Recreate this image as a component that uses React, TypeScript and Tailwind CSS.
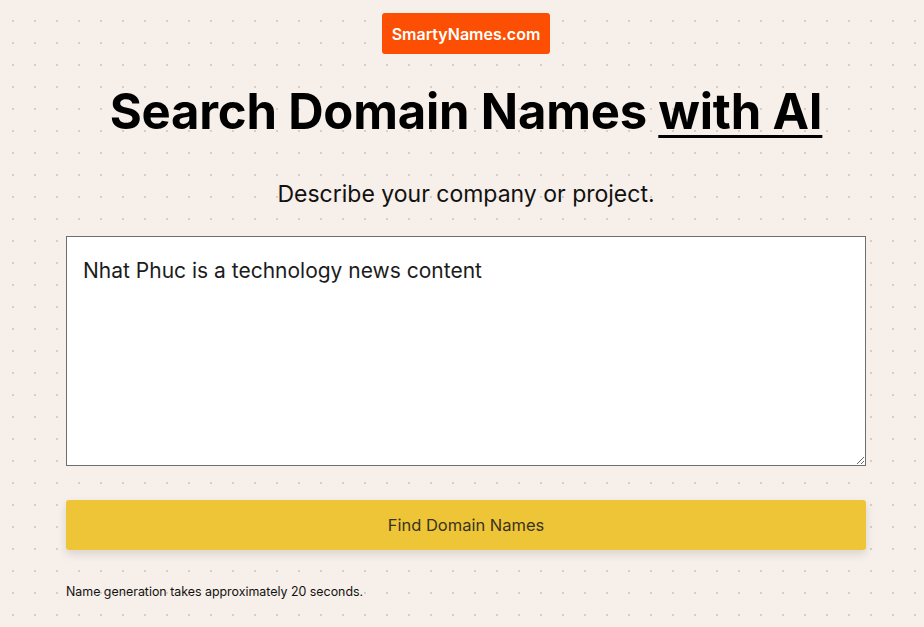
import React, { useState } from 'react';

const App: React.FC = () => {
  const [text, setText] = useState('Nhat Phuc is a technology news content');

  return (
    <div
      className="min-h-[627px] w-full bg-[#f7efe9] bg-[radial-gradient(#d9cec4_0.8px,transparent_1px)] bg-[size:22px_22px] bg-[position:2px_10px] pl-[8px] text-black"
      style={{ fontFamily: 'Inter, "Noto Sans", sans-serif' }}
    >
      <div className="mx-auto flex w-[800px] flex-col items-center pt-[13px]">
        {/* Brand badge */}
        <a
          href="#"
          className="flex h-[41px] w-[168px] items-center justify-center rounded-[3px] bg-[#fd4f03] text-[16px] font-semibold text-white"
        >
          SmartyNames.com
        </a>

        <h1 className="mt-[30px] text-[49px] font-bold leading-[56px] tracking-[-0.2px]">
          Search Domain Names <span className="underline decoration-[3px] underline-offset-[6px]">with AI</span>
        </h1>

        <p className="mt-[40px] text-[23px] leading-[28px] text-[#111]">Describe your company or project.</p>

        {/* Description input */}
        <textarea
          value={text}
          onChange={(e) => setText(e.target.value)}
          className="mt-[28px] h-[230px] w-full resize-y border border-[#6e6e6e] bg-white px-4 py-[20px] text-[21px] leading-[28px] text-[#1c1c1c] outline-none"
        />

        <button className="mt-[34px] h-[50px] w-full rounded-[3px] bg-[#eec537] text-[16.5px] text-[#3a3320] shadow-[0_4px_10px_rgba(0,0,0,0.12)]">
          Find Domain Names
        </button>

        <p className="mt-[34px] self-start text-[12.4px] leading-[16px] text-[#111]">
          Name generation takes approximately 20 seconds.
        </p>
      </div>
    </div>
  );
};

export default App;
